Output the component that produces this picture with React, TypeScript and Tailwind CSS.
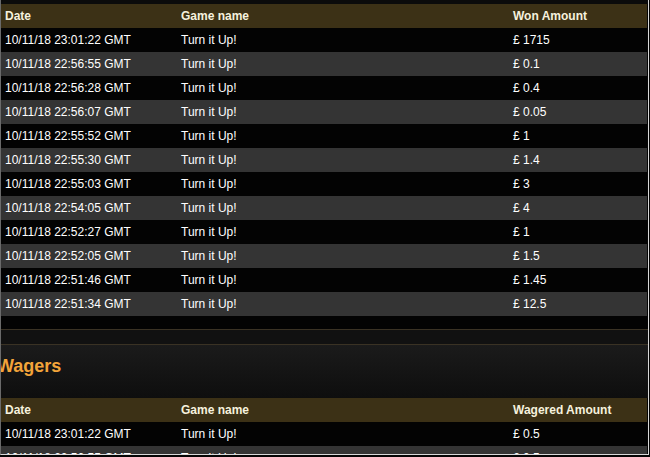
import React from "react";

interface Row {
  date: string;
  game: string;
  amount: string;
}

const wins: Row[] = [
  { date: "10/11/18 23:01:22 GMT", game: "Turn it Up!", amount: "1715" },
  { date: "10/11/18 22:56:55 GMT", game: "Turn it Up!", amount: "0.1" },
  { date: "10/11/18 22:56:28 GMT", game: "Turn it Up!", amount: "0.4" },
  { date: "10/11/18 22:56:07 GMT", game: "Turn it Up!", amount: "0.05" },
  { date: "10/11/18 22:55:52 GMT", game: "Turn it Up!", amount: "1" },
  { date: "10/11/18 22:55:30 GMT", game: "Turn it Up!", amount: "1.4" },
  { date: "10/11/18 22:55:03 GMT", game: "Turn it Up!", amount: "3" },
  { date: "10/11/18 22:54:05 GMT", game: "Turn it Up!", amount: "4" },
  { date: "10/11/18 22:52:27 GMT", game: "Turn it Up!", amount: "1" },
  { date: "10/11/18 22:52:05 GMT", game: "Turn it Up!", amount: "1.5" },
  { date: "10/11/18 22:51:46 GMT", game: "Turn it Up!", amount: "1.45" },
  { date: "10/11/18 22:51:34 GMT", game: "Turn it Up!", amount: "12.5" },
];

const wagers: Row[] = [
  { date: "10/11/18 23:01:22 GMT", game: "Turn it Up!", amount: "0.5" },
  { date: "10/11/18 22:56:55 GMT", game: "Turn it Up!", amount: "0.5" },
  { date: "10/11/18 22:56:28 GMT", game: "Turn it Up!", amount: "0.5" },
];

const HistoryTable = ({ rows, amountLabel }: { rows: Row[]; amountLabel: string }) => {
  return (
    <div className="w-[646px] text-[12px] leading-[24px]">
      <div className="flex h-[24px] bg-[#3c3116] font-bold text-[#f6f1de]">
        <div className="w-[176px] pl-[4px]">Date</div>
        <div className="w-[332px] pl-[4px]">Game name</div>
        <div className="flex-1 pl-[4px]">{amountLabel}</div>
      </div>
      {rows.map((row, i) => (
        <div
          key={i}
          className={
            "flex h-[24px] text-white " + (i % 2 === 0 ? "bg-[#030303]" : "bg-[#343434]")
          }
        >
          <div className="w-[176px] pl-[4px]">{row.date}</div>
          <div className="w-[332px] pl-[4px]">{row.game}</div>
          <div className="flex-1 pl-[4px]">£ {row.amount}</div>
        </div>
      ))}
    </div>
  );
};

export default function App() {
  return (
    <div
      className="h-[457px] w-[650px] overflow-hidden bg-[#050505]"
      style={{ fontFamily: '"Liberation Sans", Arial, sans-serif' }}
    >
      <div className="h-[455px] w-[649px] overflow-hidden border-b border-r border-l border-b-[#d8d8d8] border-r-[#d8d8d8] border-l-[#6a6a6a] bg-[#050505]">
        <div className="h-[4px] bg-[#0b0b0b]" />
        <HistoryTable rows={wins} amountLabel="Won Amount" />
        <div className="h-[13px] bg-[#030303]" />
        <div className="h-[16px] border-y border-[#3a3224] bg-[#111111]" />
        <div className="flex h-[53px] items-center bg-gradient-to-b from-[#1b1b1b] to-[#0e0e0e] pb-[10px]">
          <h2 className="ml-[-4px] text-[18px] font-bold text-[#f3a43a]">Wagers</h2>
        </div>
        <HistoryTable rows={wagers} amountLabel="Wagered Amount" />
      </div>
    </div>
  );
}
